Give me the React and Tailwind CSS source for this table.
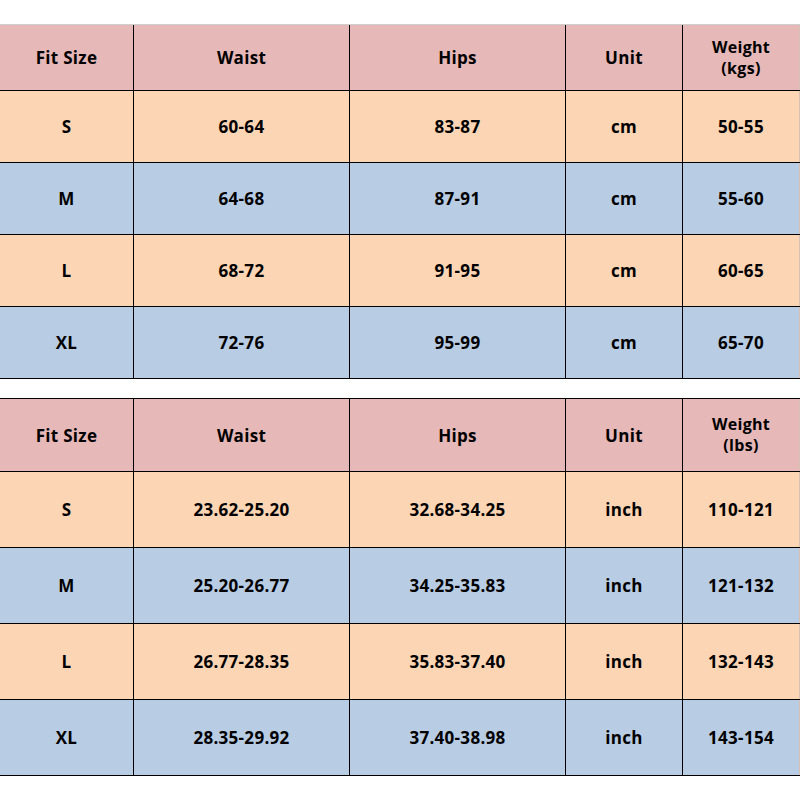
import React from "react";

const PINK = "bg-[#e6b8b7]";
const PEACH = "bg-[#fcd5b4]";
const BLUE = "bg-[#b8cce4]";

function Row({ cells, bg, h }) {
  return (
    <div className={`grid grid-cols-[134px_216px_216px_117px_117px] ${h} border-b border-black`}>
      {cells.map((c, i) => (
        <div
          key={i}
          className={`${bg} flex flex-col items-center justify-center text-center ${i < 4 ? "border-r border-black" : "border-r border-[#d9c0b5]"}`}
        >
          {c}
        </div>
      ))}
    </div>
  );
}

function Weight({ unit }) {
  return (
    <div className="text-[16px] leading-[21px]">
      <div>Weight</div>
      <div>({unit})</div>
    </div>
  );
}

export default function App() {
  const t1 = [
    ["S", "60-64", "83-87", "cm", "50-55"],
    ["M", "64-68", "87-91", "cm", "55-60"],
    ["L", "68-72", "91-95", "cm", "60-65"],
    ["XL", "72-76", "95-99", "cm", "65-70"],
  ];
  const t2 = [
    ["S", "23.62-25.20", "32.68-34.25", "inch", "110-121"],
    ["M", "25.20-26.77", "34.25-35.83", "inch", "121-132"],
    ["L", "26.77-28.35", "35.83-37.40", "inch", "132-143"],
    ["XL", "28.35-29.92", "37.40-38.98", "inch", "143-154"],
  ];
  return (
    <div
      className="w-[800px] h-[800px] bg-white text-black font-bold text-[17px] leading-none tracking-[0.3px] pt-[24px]"
      style={{ fontFamily: '"Open Sans", "Noto Sans", sans-serif' }}
    >
      <div className="border-t border-[#cfcfcf]">
        <Row h="h-[66px]" bg={PINK} cells={["Fit Size", "Waist", "Hips", "Unit", <Weight unit="kgs" />]} />
        {t1.map((r, i) => (
          <Row key={i} h="h-[72px]" bg={i % 2 === 0 ? PEACH : BLUE} cells={r} />
        ))}
      </div>
      <div className="mt-[19px] border-t border-black">
        <Row h="h-[73px]" bg={PINK} cells={["Fit Size", "Waist", "Hips", "Unit", <Weight unit="lbs" />]} />
        {t2.map((r, i) => (
          <Row key={i} h="h-[76px]" bg={i % 2 === 0 ? PEACH : BLUE} cells={r} />
        ))}
      </div>
    </div>
  );
}
